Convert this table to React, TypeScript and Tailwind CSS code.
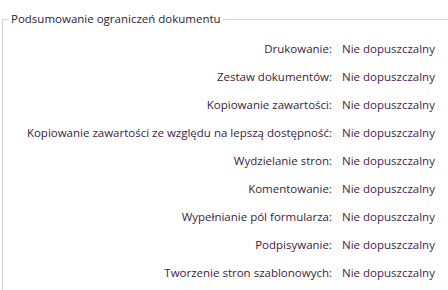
import React from 'react';

const ROWS = [
  'Drukowanie:',
  'Zestaw dokumentów:',
  'Kopiowanie zawartości:',
  'Kopiowanie zawartości ze względu na lepszą dostępność:',
  'Wydzielanie stron:',
  'Komentowanie:',
  'Wypełnianie pól formularza:',
  'Podpisywanie:',
  'Tworzenie stron szablonowych:',
];

export default function App() {
  return (
    <div className="w-[448px] h-[290px] overflow-hidden bg-white pt-[12px] pl-[2px] font-['Open_Sans',sans-serif] text-[11.5px] text-[#3a1d3a]">
      <fieldset className="border-l border-t border-[#d5d5d5] pb-4">
        <legend className="ml-[6px] px-[2px] leading-[14px] text-[#2c1b36]">Podsumowanie ograniczeń dokumentu</legend>
        <div className="grid grid-cols-[329px_auto] gap-x-[10px] pt-[9px]">
          {ROWS.map((label) => (
            <React.Fragment key={label}>
              <div className="h-[28px] flex items-center justify-end whitespace-nowrap">{label}</div>
              <div className="h-[28px] flex items-center whitespace-nowrap text-[#4a1a4a]">Nie dopuszczalny</div>
            </React.Fragment>
          ))}
        </div>
      </fieldset>
    </div>
  );
}
